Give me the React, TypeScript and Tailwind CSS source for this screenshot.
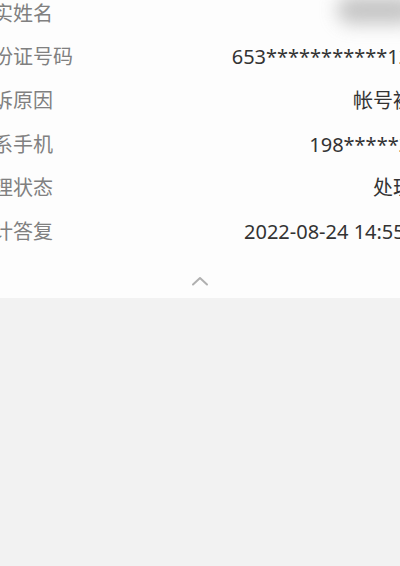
import React from "react";

const rows: { label: string; value: React.ReactNode }[] = [
  { label: "真实姓名", value: <span className="inline-block w-[80px] h-[28px] rounded-full bg-[#a0a0a0] blur-[9px] opacity-60 translate-x-[-16px] translate-y-[-2px]" /> },
  { label: "身份证号码", value: "653***********1234" },
  { label: "投诉原因", value: "帐号被封" },
  { label: "联系手机", value: "198*****263" },
  { label: "处理状态", value: "处理中" },
  { label: "预计答复", value: "2022-08-24 14:55:00" },
];

export default function App() {
  return (
    <div
      className="w-[400px] h-[566px] overflow-hidden bg-[#f2f2f2]"
      style={{ fontFamily: '"Noto Sans", "Noto Sans CJK SC", sans-serif' }}
    >
      <div className="h-[298px] bg-[#fdfdfd] overflow-hidden">
        <div className="-mt-[8px] ml-[-27px] w-[460px] flex flex-col">
          {rows.map((r) => (
            <div key={r.label} className="h-[43.6px] flex items-center justify-between text-[20px] leading-none">
              <span className="text-[#808080] whitespace-nowrap">{r.label}</span>
              <span className="text-[#333] whitespace-nowrap">{r.value}</span>
            </div>
          ))}
        </div>
        <div className="flex justify-center mt-[22px]">
          <svg width="18" height="10" viewBox="0 0 18 10" fill="none">
            <path d="M2 8.5 L9 2 L16 8.5" stroke="#b0b0b0" strokeWidth="2" strokeLinecap="round" strokeLinejoin="round" />
          </svg>
        </div>
      </div>
    </div>
  );
}
